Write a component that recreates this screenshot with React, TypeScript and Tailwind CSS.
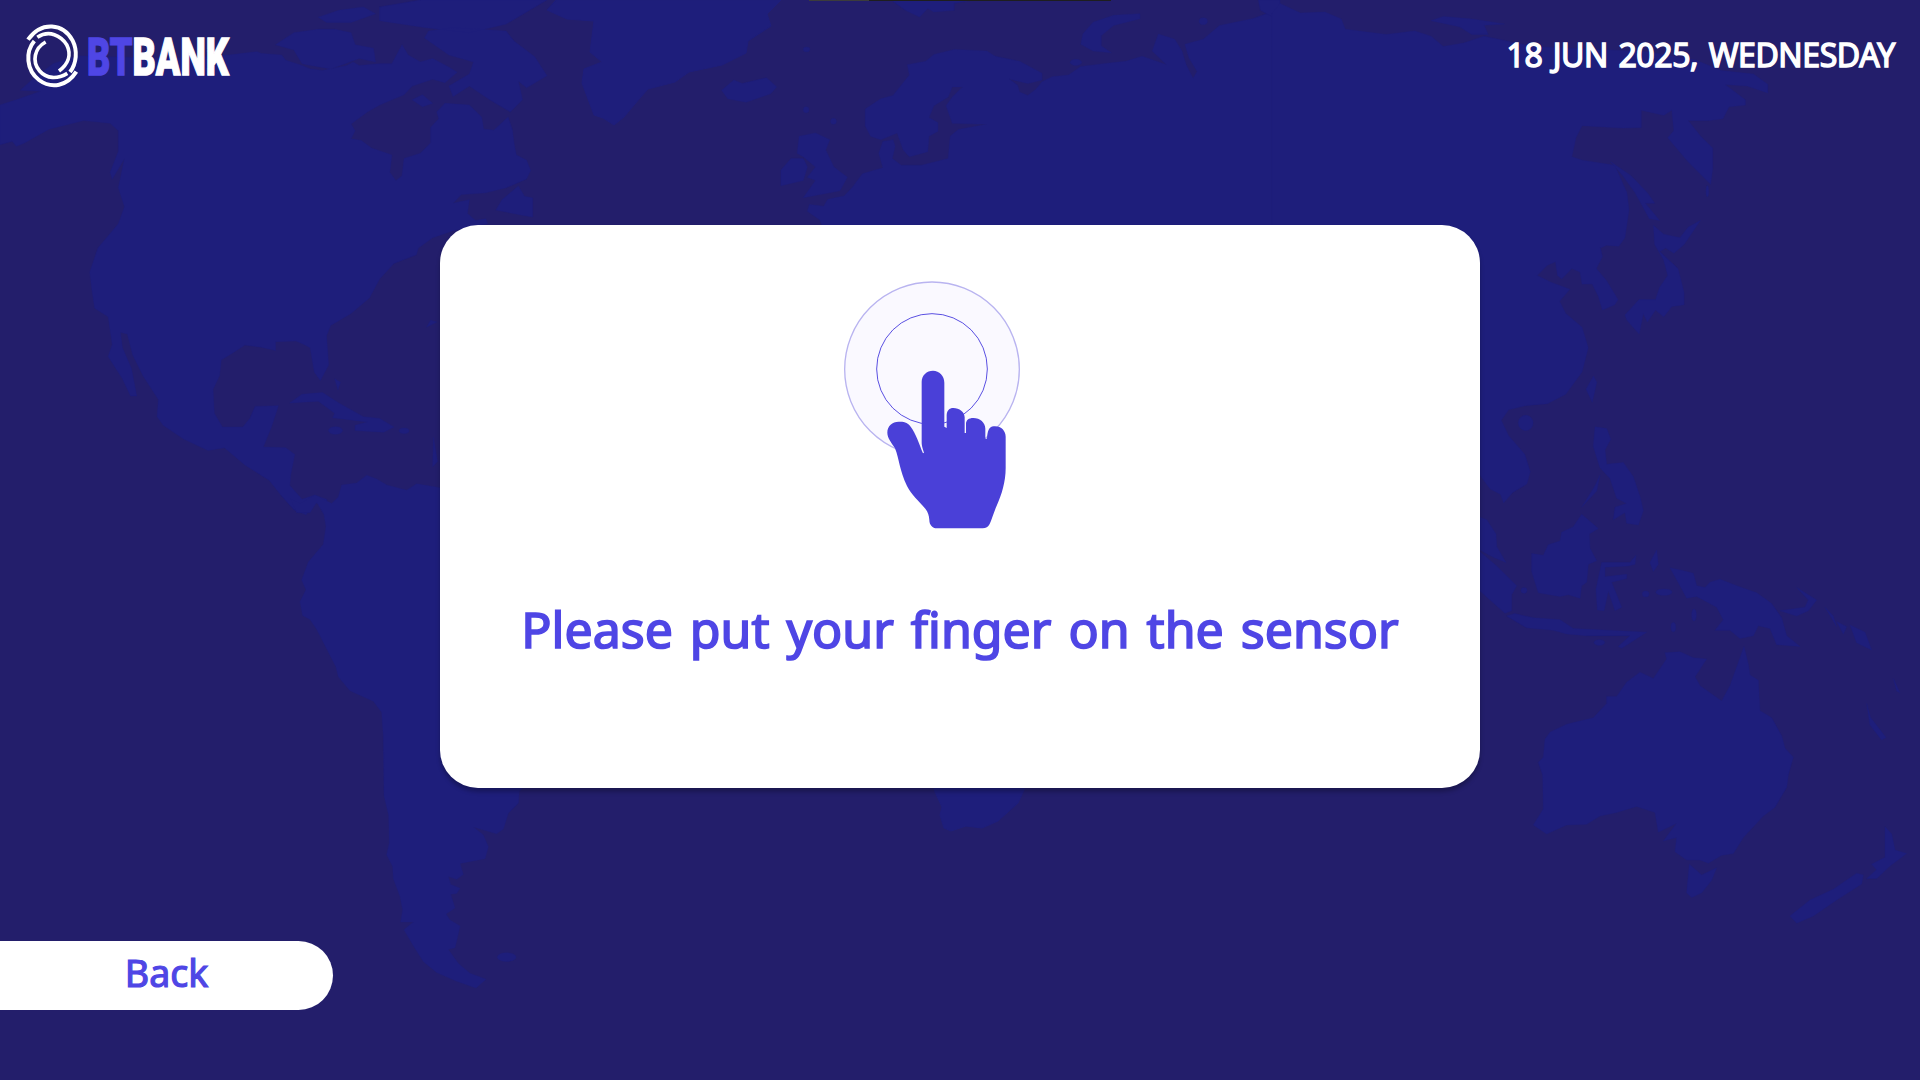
function WorldMap() {
  return (
    <svg
      className="absolute inset-0 h-[1080px] w-[1920px]"
      viewBox="0 0 1920 1080"
      fill="#1e1e7b"
      stroke="#1e1e7b"
      strokeLinejoin="round"
      aria-hidden="true"
    >
      {/* North America */}
      <g transform="scale(0.40816 0.34439)">
        <path d="M0 305 L40 290 L100 265 L50 262 L75 235 L130 185 L189 162 L400 170 L560 160 L630 150 L640 155 L690 160 L700 175 L740 190 L760 200 L790 205 L850 190 L865 180 L880 190 L930 185 L960 185 L985 130 L1000 160 L1030 180 L1060 170 L1100 195 L1120 210 L1090 240 L1060 230 L1010 250 L990 275 L960 290 L930 305 L900 325 L860 360 L870 380 L860 403 L885 408 L910 430 L960 450 L955 500 L970 525 L985 510 L990 460 L1030 445 L1055 415 L1055 370 L1075 345 L1070 325 L1090 300 L1150 305 L1180 340 L1185 375 L1210 378 L1245 340 L1255 375 L1260 420 L1265 450 L1290 465 L1300 495 L1290 520 L1240 545 L1190 560 L1130 565 L1110 590 L1150 580 L1145 620 L1165 640 L1190 635 L1195 650 L1110 670 L1060 690 L1025 720 L1020 740 L965 765 L930 810 L905 865 L860 910 L810 945 L800 975 L805 1060 L785 1105 L770 1080 L760 1010 L745 1000 L725 990 L675 992 L675 1018 L640 1008 L600 1002 L570 1025 L542 1045 L538 1090 L522 1130 L525 1200 L545 1240 L595 1240 L612 1215 L625 1180 L682 1178 L665 1240 L645 1298 L700 1300 L722 1320 L712 1380 L710 1410 L740 1450 L770 1438 L800 1450 L800 1465 L770 1460 L750 1495 L720 1480 L690 1440 L660 1395 L600 1350 L550 1300 L510 1308 L450 1275 L400 1235 L385 1210 L388 1160 L350 1090 L325 1030 L312 970 L295 965 L300 1010 L322 1070 L335 1150 L320 1150 L300 1100 L265 1035 L275 1000 L265 920 L232 895 L225 840 L220 790 L240 720 L290 650 L305 600 L290 545 L305 460 L275 520 L270 500 L290 440 L290 380 L270 358 L205 350 L120 375 L60 415 L40 425 L30 410 L0 420 Z" />
        <path d="M675 130 L720 95 L780 85 L820 85 L860 95 L870 130 L915 140 L920 180 L880 170 L810 200 L740 185 L720 145 Z M780 50 L830 30 L890 20 L920 40 L860 65 L800 65 Z M930 20 L1030 0 L1340 0 L1240 70 L1150 95 L1040 80 L930 60 Z M1050 90 L1110 80 L1240 90 L1260 120 L1310 165 L1340 220 L1290 255 L1270 235 L1280 290 L1250 325 L1200 290 L1150 250 L1110 280 L1100 250 L1150 215 L1160 180 L1100 160 L1040 110 Z M1010 290 L1035 275 L1060 300 L1035 310 Z" />
        <path d="M1270 540 L1285 570 L1305 575 L1305 630 L1280 625 L1215 610 L1230 580 Z M710 1170 L740 1145 L790 1140 L830 1170 L890 1210 L930 1215 L965 1240 L940 1255 L870 1250 L870 1235 L900 1225 L815 1213 L820 1200 L780 1165 Z M820 1100 L834 1110 L828 1132 Z M1045 950 L1055 930 L1070 935 Z" />
        <ellipse cx="822" cy="1250" rx="17" ry="11" />
        <ellipse cx="990" cy="1251" rx="12" ry="8" />
        <path d="M1062 1270 L1072 1340 L1060 1355 Z" />
      </g>
      {/* Greenland */}
      <path d="M556 0 L547 10 L567 19 L594 21 L590 52 L602 62 L584 69 L582 83 L594 115 L603 118 L614 125 L624 117 L640 98 L648 89 L675 82 L689 72 L722 65 L746 53 L748 41 L771 26 L767 14 L781 0 Z" />
      {/* South America */}
      <g transform="translate(200 400) scale(0.33333 0.39541)">
        <path d="M272 250 L300 262 L345 240 L395 262 L415 245 L425 215 L470 210 L500 190 L530 200 L560 215 L620 228 L650 212 L720 222 L1000 300 L1000 950 L958 990 L955 1020 L925 1045 L910 1085 L890 1097 L820 1080 L850 1100 L865 1130 L855 1160 L780 1172 L790 1200 L770 1212 L745 1205 L752 1225 L780 1235 L770 1248 L752 1250 L765 1285 L738 1300 L750 1315 L780 1330 L775 1350 L765 1385 L745 1390 L775 1425 L810 1450 L858 1465 L828 1487 L770 1470 L710 1448 L670 1420 L640 1380 L612 1340 L640 1320 L602 1320 L608 1290 L600 1255 L580 1210 L578 1180 L560 1150 L568 1120 L566 1050 L552 1000 L550 850 L545 790 L520 762 L450 735 L415 700 L408 675 L350 580 L330 555 L308 545 L300 510 L318 480 L305 455 L325 410 L370 365 L378 320 L372 290 L350 258 L330 285 L290 285 Z" />
        <ellipse cx="920" cy="1409" rx="28" ry="11" />
      </g>
      {/* Southern Africa */}
      <path d="M930 770 L935 792 L942 807 L940 815 L944 828 L951 831 L966 826 L982 828 L998 821 L1008 812 L1018 803 L1024 790 L1024 770 Z" />
      {/* Europe and western Asia */}
      <g transform="translate(640 0) scale(0.40816 0.34074)">
        <path d="M460 700 L440 645 L410 620 L415 600 L450 605 L460 585 L500 575 L520 550 L545 510 L595 492 L585 450 L595 415 L620 410 L625 430 L618 465 L640 485 L690 485 L755 465 L760 400 L780 380 L850 365 L765 362 L750 310 L765 285 L790 255 L765 255 L755 285 L720 310 L708 345 L730 360 L730 385 L708 400 L705 445 L660 460 L645 440 L630 390 L590 410 L565 400 L552 370 L552 320 L590 290 L620 280 L660 220 L655 190 L700 180 L720 160 L770 145 L850 150 L870 165 L930 180 L985 215 L985 235 L950 245 L905 232 L925 250 L930 270 L950 280 L970 262 L985 240 L1010 225 L1050 220 L1080 195 L1150 185 L1190 180 L1230 165 L1290 190 L1255 150 L1270 100 L1310 115 L1328 150 L1338 190 L1355 230 L1365 210 L1345 170 L1335 130 L1380 115 L1420 75 L1500 55 L1560 30 L1600 40 L1600 700 Z" />
        <path d="M200 265 L230 235 L250 245 L310 228 L335 255 L320 275 L260 300 L215 290 Z M390 400 L430 390 L465 410 L455 440 L475 490 L508 520 L490 560 L400 580 L430 530 L410 520 L430 490 L400 460 L385 450 Z M345 545 L345 500 L370 465 L400 465 L410 490 L400 530 Z M615 0 L815 0 L770 10 L770 30 L720 35 L705 25 L685 50 L650 30 Z M1080 130 L1085 100 L1110 65 L1160 45 L1225 40 L1225 55 L1160 75 L1130 105 L1130 135 L1155 155 L1110 150 Z M1515 0 L1568 0 L1568 30 L1550 50 L1520 30 Z" />
        <ellipse cx="408" cy="145" rx="8" ry="7" />
        <ellipse cx="407" cy="322" rx="7" ry="9" />
        <ellipse cx="474" cy="356" rx="7" ry="9" />
        <ellipse cx="1068" cy="183" rx="14" ry="9" />
        <ellipse cx="1380" cy="62" rx="10" ry="10" />
      </g>
      {/* Eastern Asia */}
      <g transform="translate(1280 0) scale(0.40816 0.34439)">
        <path d="M-20 40 L0 10 L50 38 L110 35 L150 55 L160 85 L260 100 L330 90 L370 105 L400 135 L450 125 L500 105 L620 135 L900 150 L1020 175 L1080 205 L1160 215 L1195 245 L1195 270 L1145 250 L1090 245 L1140 290 L1140 305 L1100 310 L1085 345 L1050 350 L1000 350 L1030 395 L1060 430 L1060 490 L1055 535 L1000 470 L950 400 L965 380 L960 320 L940 335 L885 320 L885 370 L840 372 L740 365 L725 400 L715 455 L740 465 L820 480 L850 560 L855 610 L845 690 L830 715 L800 712 L785 720 L790 745 L775 780 L800 815 L828 870 L820 885 L790 900 L780 860 L765 825 L740 825 L735 790 L715 780 L690 810 L680 800 L675 760 L655 770 L630 800 L665 820 L710 840 L685 875 L700 910 L740 950 L755 1010 L740 1080 L700 1145 L655 1172 L600 1178 L560 1190 L542 1220 L560 1265 L600 1320 L613 1370 L605 1405 L570 1430 L548 1460 L540 1435 L515 1420 L490 1380 L300 1300 L-20 800 Z" />
        <path d="M810 470 L860 510 L900 560 L918 590 L895 590 L930 640 L905 635 L870 560 L840 510 Z M915 655 L940 680 L980 690 L1000 660 L1030 640 L990 710 L965 735 L945 720 L930 730 L975 780 L990 850 L990 885 L960 890 L940 920 L920 900 L900 935 L890 910 L880 970 L850 930 L845 915 L880 870 L920 870 L930 835 L950 800 L940 755 L918 710 Z M768 1092 L776 1110 L765 1168 L750 1130 Z M370 60 L400 48 L470 55 L550 70 L500 73 L510 100 L470 100 L440 78 Z" />
        <ellipse cx="602" cy="1228" rx="18" ry="22" />
        <ellipse cx="1047" cy="555" rx="3" ry="16" />
      </g>
      {/* South-east Asia and Oceania */}
      <g transform="translate(1400 400) scale(0.33333 0.35714)">
        <path d="M585 75 L620 80 L632 110 L615 140 L620 180 L670 175 L700 215 L720 270 L730 310 L715 350 L680 345 L675 315 L640 335 L645 300 L680 290 L650 275 L630 220 L600 190 L580 130 Z M600 210 L590 255 L545 300 L585 240 Z M545 320 L595 360 L568 375 L570 415 L590 450 L565 460 L560 510 L545 520 L540 555 L505 545 L480 550 L415 540 L395 480 L395 430 L430 435 L445 405 L480 395 L485 370 L520 355 Z M240 425 L290 465 L350 520 L335 545 L335 590 L315 597 L240 535 Z M230 325 L260 335 L288 375 L290 410 L318 455 L280 440 L230 415 Z M320 605 L345 598 L400 610 L480 615 L520 640 L740 650 L665 695 L655 690 L690 660 L560 660 L500 655 L460 645 L380 638 Z M605 455 L690 455 L708 435 L705 460 L685 465 L615 468 L615 495 L680 488 L680 500 L635 510 L665 580 L645 590 L625 535 L612 590 L592 588 L588 530 Z M750 455 L770 420 L775 460 L760 480 Z" />
        <path d="M810 470 L850 478 L880 485 L890 520 L915 525 L930 510 L960 502 L1010 520 L1070 540 L1115 570 L1145 610 L1160 660 L1200 690 L1130 685 L1110 640 L1075 632 L1060 660 L1020 668 L990 645 L945 645 L970 615 L950 580 L890 550 L860 555 L840 520 Z M1140 590 L1215 580 L1225 560 L1190 525 L1250 560 L1225 590 L1190 605 Z M1275 580 L1300 605 L1310 635 Z M1310 620 L1340 635 L1330 655 Z M1350 630 L1395 650 L1415 700 L1370 680 Z M1480 780 L1500 820 L1490 815 Z M1400 850 L1412 890 L1458 945 L1445 952 L1410 910 Z" />
        <path d="M1032 690 L1045 740 L1050 770 L1075 785 L1080 870 L1115 890 L1145 940 L1155 975 L1180 1000 L1165 1050 L1160 1085 L1125 1140 L1090 1165 L1030 1225 L1000 1270 L965 1275 L925 1297 L900 1288 L860 1288 L825 1265 L830 1225 L790 1235 L830 1185 L775 1210 L765 1155 L710 1138 L650 1155 L600 1165 L560 1188 L500 1190 L440 1215 L400 1190 L430 1145 L428 1050 L415 1015 L430 1000 L435 950 L450 930 L500 908 L580 890 L620 850 L620 830 L650 830 L680 790 L720 762 L760 780 L800 725 L795 708 L840 705 L880 722 L920 725 L885 775 L900 800 L965 843 L990 800 Z M868 1300 L905 1330 L950 1310 L935 1345 L905 1380 L875 1393 L860 1380 Z" />
        <path d="M1170 1445 L1230 1400 L1300 1370 L1370 1325 L1390 1330 L1385 1355 L1310 1400 L1240 1445 L1190 1465 Z M1400 1340 L1430 1315 L1415 1300 L1455 1280 L1455 1195 L1475 1215 L1485 1260 L1520 1270 L1470 1305 L1430 1340 Z" />
        <ellipse cx="737" cy="543" rx="10" ry="8" />
        <ellipse cx="792" cy="538" rx="24" ry="9" />
        <ellipse cx="882" cy="602" rx="7" ry="17" />
        <ellipse cx="598" cy="679" rx="16" ry="8" />
        <ellipse cx="820" cy="636" rx="7" ry="13" />
        <ellipse cx="372" cy="533" rx="9" ry="8" />
      </g>
    </svg>
  );
}

function Logo() {
  return (
    <div className="flex h-[76px] w-[214px] items-center">
      <svg className="h-[76px] w-[63px] shrink-0" viewBox="24 17 63 76" aria-hidden="true">
        <g transform="scale(0.33333)" fill="none" stroke="#fff">
          <path d="M84 119 C125 62 190 70 218 122 C233 152 230 190 210 216" strokeWidth="12" />
          <path d="M112 112 C148 88 183 108 200 134 C216 166 203 194 177 213" strokeWidth="11" />
          <path d="M103 123 C76 155 78 210 117 240 C155 268 202 258 229 215" strokeWidth="12" />
          <path d="M137 126 C104 144 94 184 119 213 C140 237 172 238 202 220" strokeWidth="11" />
        </g>
      </svg>
      <span className="origin-left scale-x-[0.707] pt-[6px] font-[Roboto,sans-serif] text-[51px] leading-[60px] font-black whitespace-nowrap text-white [-webkit-text-stroke:1.3px]">
        <span className="text-[#4f46e5]">BT</span>BANK
      </span>
    </div>
  );
}

function TouchIllustration() {
  return (
    <svg className="h-[290px] w-[220px]" viewBox="0 0 660 870" aria-hidden="true">
      <circle cx="336" cy="328" r="262" fill="#faf9ff" stroke="#b9b4f0" strokeWidth="4" />
      <circle cx="336" cy="327" r="166" fill="none" stroke="#5a50e2" strokeWidth="3" />
      <path
        fill="#4a40d8"
        d="M305 366 C305 346 320 332 339 332 C358 332 373 347 373 368 L373 500 L380 504 L380 466 C380 452 388 444 400 444 C418 444 434 456 434 472 L434 519 L438 519 L438 492 C438 480 446 474 460 474 C480 474 496 488 496 506 L496 536 L501 536 C502 515 507 499 521 499 C543 497 557 512 557 530 L557 625 C557 665 545 705 531 735 C520 760 515 780 509 792 C504 801 498 805 488 805 L350 805 C338 805 328 795 328 780 C327 765 324 757 316 746 C295 722 275 705 261 678 C238 630 238 598 225 565 C215 548 202 535 202 518 C202 498 217 485 236 485 C255 484 264 489 272 500 C288 522 297 550 309 580 L312 578 C306 560 305 555 305 545 Z"
      />
    </svg>
  );
}

export default function App() {
  return (
    <div className="relative h-[1080px] w-[1920px] overflow-hidden bg-[#231e6b] font-['Noto_Sans',sans-serif]">
      <WorldMap />
      <div className="relative flex h-full flex-col">
        <div className="mx-auto flex h-px w-[302px]">
          <div className="w-[60px] bg-[#3c3c3c]" />
          <div className="flex-1 bg-[#1e1e1e]" />
        </div>
        <header className="flex h-[108px] items-center justify-between pr-[25px] pl-6">
          <Logo />
          <p className="text-[32px] tracking-[-0.4px] text-white [-webkit-text-stroke:1.4px_#fff] [word-spacing:2.5px]">
            18 JUN 2025, WEDNESDAY
          </p>
        </header>
        <main className="mx-auto mt-[116px] flex h-[563px] w-[1040px] flex-col items-center rounded-[38px] bg-white pt-[35px] shadow-[0_4px_4px_rgba(0,0,0,0.25)]">
          <div className="mr-[60px]">
            <TouchIllustration />
          </div>
          <h1 className="mt-[45px] text-[50px] leading-[68px] whitespace-nowrap text-[#4f46e5] [-webkit-text-stroke:1.7px_#4f46e5] [word-spacing:4px]">
            Please put your finger on the sensor
          </h1>
        </main>
        <button className="mt-[153px] flex h-[69px] w-[333px] items-center justify-center rounded-r-full bg-white pb-[5px] text-[37.5px] leading-[52px] text-[#4f46e5] [-webkit-text-stroke:1.2px_#4f46e5]">
          Back
        </button>
      </div>
    </div>
  );
}
